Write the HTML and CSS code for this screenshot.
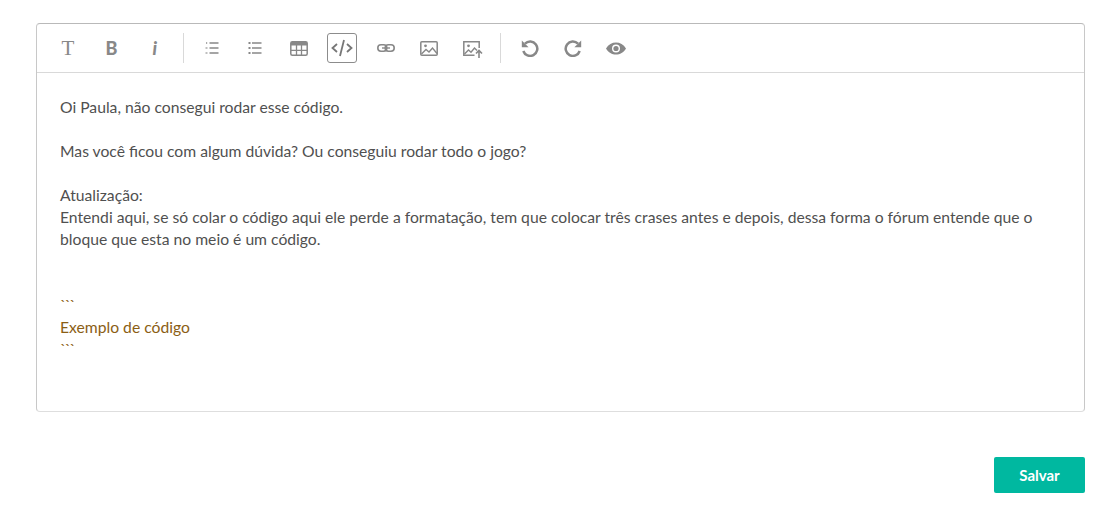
FILE: index.html
```
<!DOCTYPE html>
<html lang="pt">
<head>
<meta charset="utf-8">
<title>Editor</title>
<link rel="stylesheet" href="styles.css">
</head>
<body>
<div class="editor">
  <div class="toolbar">
    <button class="tool glyph glyph-t">T</button>
    <button class="tool glyph glyph-b">B</button>
    <button class="tool glyph glyph-i">i</button>
    <span class="sep"></span>
    <button class="tool"><svg width="14" height="14" viewBox="0 0 14 14"><path d="M4.500 2h9M4.500 7h9M4.500 12h9" stroke="#888" stroke-width="1.700" fill="none"/><path d="M1 1h1.200v2H1zM.5 6.300h2v1.400h-2zM.5 11.300h2v1.400h-2z" fill="#aaa"/></svg></button>
    <button class="tool"><svg width="14" height="14" viewBox="0 0 14 14"><path d="M4 2h9.500M4 7h9.500M4 12h9.500" stroke="#888" stroke-width="1.700" fill="none"/><path d="M.5 1h2v2h-2zM.5 6h2v2h-2zM.5 11h2v2h-2z" fill="#888"/></svg></button>
    <button class="tool"><svg width="18" height="15" viewBox="0 0 18 15"><rect x=".8" y=".8" width="16.400" height="13.400" rx="1.500" fill="none" stroke="#888" stroke-width="1.500"/><path d="M1 1h16v3.500H1z" fill="#888"/><path d="M1 9.300h16M6.500 4v10.500M11.500 4v10.500" stroke="#888" stroke-width="1.300" fill="none"/></svg></button>
    <button class="tool tool-active"><svg width="22" height="20" viewBox="0 0 22 20"><path d="M6 6l-4.500 4L6 14M16 6l4.500 4L16 14M13 2L9 18" fill="none" stroke="#777" stroke-width="1.800"/></svg></button>
    <button class="tool"><svg width="18" height="8" viewBox="0 0 18 8"><rect x=".8" y=".8" width="9" height="6.400" rx="3.200" fill="none" stroke="#888" stroke-width="1.600"/><rect x="8.200" y=".8" width="9" height="6.400" rx="3.200" fill="none" stroke="#888" stroke-width="1.600"/><path d="M5 4h8" stroke="#888" stroke-width="1.400"/></svg></button>
    <button class="tool"><svg width="18" height="15" viewBox="0 0 18 15"><rect x=".8" y=".8" width="16.400" height="13.400" rx="1" fill="none" stroke="#888" stroke-width="1.500"/><path d="M1.500 13l4.500-4.500 3 2.500 3.500-4 4.500 5.500" fill="none" stroke="#888" stroke-width="1.400"/><circle cx="5.500" cy="4.800" r="1.400" fill="#888"/></svg></button>
    <button class="tool tool-upload"><svg width="20" height="17" viewBox="0 0 20 17"><path d="M11.500 14.200H.8V.8h15.400V7" fill="none" stroke="#888" stroke-width="1.500"/><path d="M1.500 13l4-4 2.500 2.200L11.500 7l2.500 2.500" fill="none" stroke="#888" stroke-width="1.400"/><circle cx="5.500" cy="4.800" r="1.400" fill="#888"/><path d="M16 17V9.500M13 12.500l3-3 3 3" fill="none" stroke="#888" stroke-width="1.600"/></svg></button>
    <span class="sep"></span>
    <button class="tool"><svg width="18" height="18" viewBox="0 0 18 18"><path d="M4 4.600A7.200 7.200 0 1 1 2.300 12" fill="none" stroke="#888" stroke-width="2.500"/><path d="M.8 1.500v6.800h6.800z" fill="#888"/></svg></button>
    <button class="tool"><svg width="18" height="18" viewBox="0 0 18 18"><path d="M14 4.600A7.200 7.200 0 1 0 15.700 12" fill="none" stroke="#888" stroke-width="2.500"/><path d="M17.200 1.500v6.800h-6.800z" fill="#888"/></svg></button>
    <button class="tool"><svg width="20" height="13" viewBox="0 0 20 13"><path fill-rule="evenodd" fill="#888" d="M0 6.500C2.500 2.300 6 .5 10 .5s7.500 1.800 10 6c-2.500 4.200-6 6-10 6s-7.500-1.800-10-6zM10 2.500a4 4 0 1 0 0 8 4 4 0 0 0 0-8z"/><circle cx="10" cy="6.500" r="2.600" fill="#888"/></svg></button>
  </div>
  <div class="content">
    <p>Oi Paula, não consegui rodar esse código.</p>
    <p>Mas você ficou com algum dúvida? Ou conseguiu rodar todo o jogo?</p>
    <p>Atualização:<br>Entendi aqui, se só colar o código aqui ele perde a formatação, tem que colocar três crases antes e depois, dessa forma o fórum entende que o bloque que esta no meio é um código.</p>
    <p class="blank"></p>
    <p class="code"><span class="fence">```</span><br>Exemplo de código<br><span class="fence">```</span></p>
  </div>
</div>
<div class="actions">
  <button class="save">Salvar</button>
</div>
</body>
</html>
```
FILE: styles.css
```
html, body {
  margin: 0;
  padding: 0;
  background: #fff;
}
body {
  padding: 23px 32px 0 36px;
  font-family: Lato, "Liberation Sans", sans-serif;
}
.editor {
  border: 1px solid #dedede;
  border-top-color: #b9b9b9;
  border-left-color: #c8c8c8;
  border-right-color: #c8c8c8;
  border-radius: 4px;
  height: 389px;
  box-sizing: border-box;
}
.toolbar {
  display: flex;
  align-items: center;
  gap: 13.4px;
  height: 48px;
  padding-left: 16px;
  border-bottom: 1px solid #d9d9d9;
}
.tool {
  width: 30px;
  height: 30px;
  padding: 0;
  display: flex;
  align-items: center;
  justify-content: center;
  background: none;
  border: 1px solid transparent;
  border-radius: 3px;
  color: #888;
}
.tool-active {
  border-color: #8c8c8c;
}
.tool-upload svg {
  margin: 2px 0 0 1px;
}
.glyph {
  line-height: 1;
}
.glyph-t {
  font-family: "Liberation Serif", serif;
  font-size: 21px;
}
.glyph-b {
  font-family: Lato, sans-serif;
  font-size: 18px;
  font-weight: 900;
}
.glyph-i {
  font-family: Lato, sans-serif;
  font-size: 18px;
  font-style: italic;
  font-weight: 900;
}
.sep {
  width: 1px;
  height: 30px;
  background: #d9d9d9;
  margin: 0 -0.3px;
}
.content {
  padding: 23px 23px 0;
  font-size: 15.7px;
  line-height: 22px;
  color: #505050;
}
.content p {
  margin: 0 0 22px;
}
.content .blank {
  margin: 0;
  height: 22px;
}
.content .code {
  margin: 0;
  color: #8b5e14;
}
.fence {
  letter-spacing: -1.500px;
}
.actions {
  display: flex;
  justify-content: flex-end;
  margin-top: 45px;
}
.save {
  width: 91px;
  height: 36px;
  border: 0;
  border-radius: 2px;
  background: #00b8a0;
  color: #fff;
  font-family: Lato, "Liberation Sans", sans-serif;
  font-size: 15px;
  font-weight: 700;
}
```
